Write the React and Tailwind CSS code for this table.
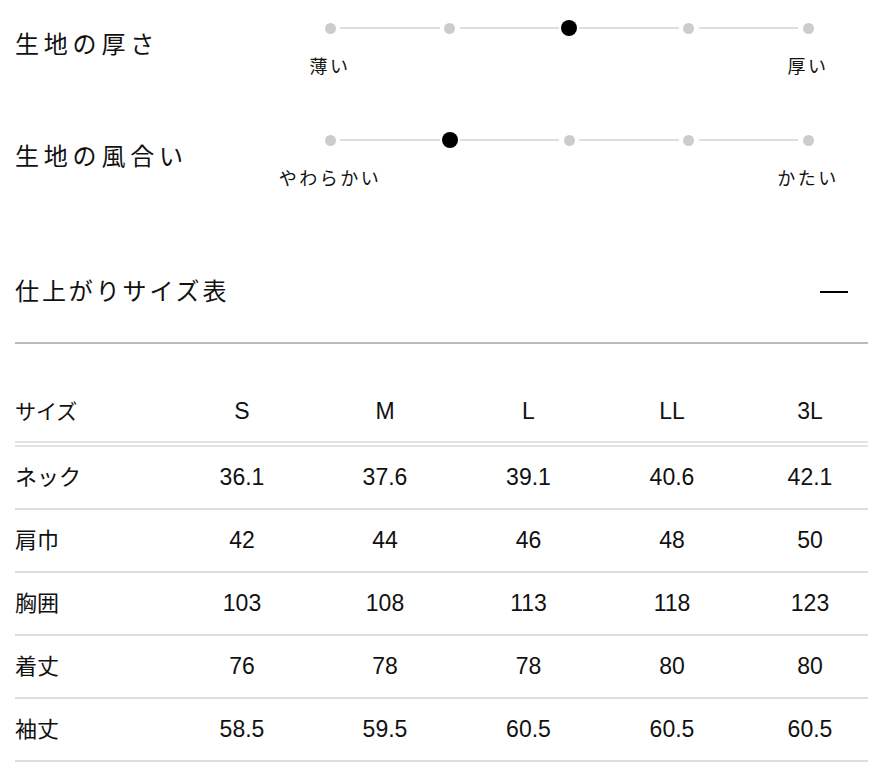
const font = { fontFamily: '"Liberation Sans", "Noto Sans CJK JP", sans-serif' }

const fabric = [
  { title: '生地の厚さ', left: '薄い', right: '厚い', value: 2 },
  { title: '生地の風合い', left: 'やわらかい', right: 'かたい', value: 1 },
]

const sizes = ['S', 'M', 'L', 'LL', '3L']

const rows = [
  { label: 'ネック', values: ['36.1', '37.6', '39.1', '40.6', '42.1'] },
  { label: '肩巾', values: ['42', '44', '46', '48', '50'] },
  { label: '胸囲', values: ['103', '108', '113', '118', '123'] },
  { label: '着丈', values: ['76', '78', '78', '80', '80'] },
  { label: '袖丈', values: ['58.5', '59.5', '60.5', '60.5', '60.5'] },
]

function Scale({ value }) {
  const steps = [0, 1, 2, 3, 4]
  return (
    <div className="flex items-center h-4 px-[55px]">
      {steps.map(i => (
        <div key={i} className="contents">
          <div className="w-[10px] h-4 flex items-center justify-center shrink-0">
            {i === value ? (
              <span className="w-4 h-4 rounded-full bg-black shrink-0" />
            ) : (
              <span className="w-[11px] h-[11px] rounded-full bg-[#cccccc] shrink-0" />
            )}
          </div>
          {i < 4 && <div className="flex-1 h-[2px] bg-[#dedede] mx-[5px]" />}
        </div>
      ))}
    </div>
  )
}

function FabricRow({ item }) {
  return (
    <div className="flex items-start">
      <h3 className="w-[255px] mt-[9px] text-[24px] leading-8 tracking-[0.2em] text-[#111]">
        {item.title}
      </h3>
      <div className="flex-1">
        <Scale value={item.value} />
        <div className="flex justify-between mt-[19px]">
          <span className="w-[120px] text-center text-[18px] leading-6 tracking-[0.14em]">{item.left}</span>
          <span className="w-[120px] text-center text-[18px] leading-6 tracking-[0.14em]">{item.right}</span>
        </div>
      </div>
    </div>
  )
}

export default function App() {
  return (
    <div className="bg-white text-[#111] pl-[15px] pr-[10px] pt-5 pb-4" style={font}>

      {/* ── Fabric scales ── */}
      <div className="flex flex-col gap-[53px]">
        {fabric.map(item => <FabricRow key={item.title} item={item} />)}
      </div>

      {/* ── Size chart header ── */}
      <div className="flex items-center justify-between mt-[85px] pb-[34px] border-b-2 border-[#bbbbbb]">
        <h2 className="text-[24px] leading-8 tracking-[0.12em]">仕上がりサイズ表</h2>
        <span className="w-7 h-[2px] bg-black mr-5" />
      </div>

      {/* ── Size chart ── */}
      <div className="mt-[38px] text-[23px]">
        <div className="grid grid-cols-[156px_142px_144px_143px_144px_1fr] items-center h-[65px] border-b-[6px] border-double border-[#e3e3e3]">
          <div className="text-[21px]">サイズ</div>
          {sizes.map((s, i) => (
            <div key={s} className={i === 4 ? 'text-center pl-2' : 'text-center'}>{s}</div>
          ))}
        </div>
        {rows.map(row => (
          <div
            key={row.label}
            className="grid grid-cols-[156px_142px_144px_143px_144px_1fr] items-center h-[63px] border-b-2 border-[#dddddd]"
          >
            <div className="text-[22px]">{row.label}</div>
            {row.values.map((v, i) => (
              <div key={i} className={i === 4 ? 'text-center pl-2' : 'text-center'}>{v}</div>
            ))}
          </div>
        ))}
      </div>

    </div>
  )
}
